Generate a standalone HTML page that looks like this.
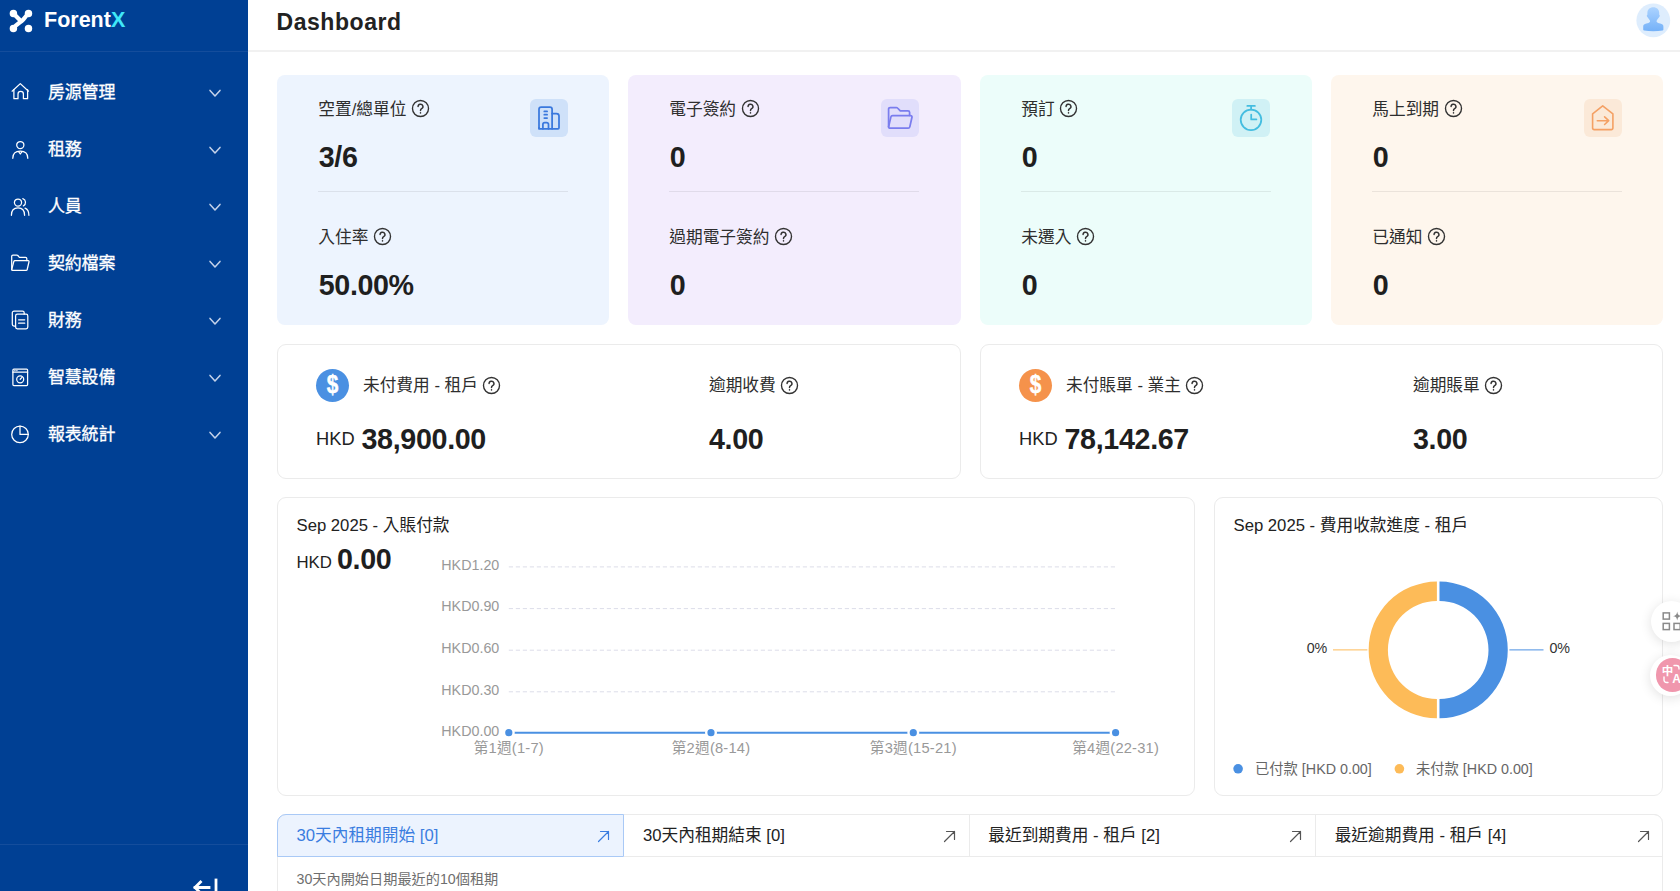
<!DOCTYPE html>
<html lang="zh-Hant">
<head>
<meta charset="utf-8">
<title>Dashboard</title>
<style>
*{box-sizing:border-box;margin:0;padding:0}
html,body{width:1680px;height:891px;overflow:hidden;background:#fff}
body{font-family:"Liberation Sans","Noto Sans CJK TC",sans-serif;color:#1f1f1f;position:relative;-webkit-font-smoothing:antialiased}
.abs{position:absolute}
/* sidebar */
#side{position:absolute;left:0;top:0;width:248px;height:891px;background:#004094;color:#fff}
#logo{position:absolute;left:0;top:0;width:248px;height:52px;border-bottom:1px solid #144d9c}
#logo .name{position:absolute;left:44px;top:6.800px;font-size:21.5px;font-weight:700;line-height:26px;letter-spacing:0px}
#logo .name b{color:#3fe7f8}
.mi{position:absolute;left:0;width:248px;height:40px}
.mi svg.ic{position:absolute;left:10px;top:10px;width:20px;height:20px;fill:none;stroke:#fff;stroke-width:1.25;stroke-linecap:round;stroke-linejoin:round}
.mi .t{position:absolute;left:48px;top:9px;font-size:17px;line-height:24px;font-weight:400;letter-spacing:-0.2px;-webkit-text-stroke:.3px #fff}
.mi svg.ch{position:absolute;left:208px;top:16px;width:14px;height:10px;fill:none;stroke:#c4d2ea;stroke-width:1.5;stroke-linecap:round;stroke-linejoin:round}
#sfoot{position:absolute;left:0;top:844px;width:248px;height:47px;border-top:1px solid #144d9c}
/* header */
#hdr{position:absolute;left:248px;top:0;width:1432px;height:52px;border-bottom:2px solid #f1f1f1;background:#fff}
#hdr h1{position:absolute;left:28.500px;top:8px;font-size:23px;line-height:28px;font-weight:700;color:#222;letter-spacing:.55px}
/* stat cards */
.sc{position:absolute;top:75px;width:332px;height:250px;border-radius:8px}
.sc .l{position:absolute;left:41.300px;font-size:16.7px;line-height:22px;color:#2e2e2e;white-space:nowrap}
.sc .v{position:absolute;left:41.800px;font-size:28.7px;line-height:32px;font-weight:700;color:#1f1f1f;letter-spacing:-.4px}
.sc .hr{position:absolute;left:41px;top:116px;width:250px;height:1px;background:rgba(0,0,0,.075)}
.sc .ib{position:absolute;left:253px;top:24px;width:38px;height:38px;border-radius:6px}
.q{display:inline-block;vertical-align:-3.500px;margin-left:4.500px;width:19px;height:19px}
.q circle{fill:none;stroke:#333;stroke-width:1.3}
.q path{fill:none;stroke:#333;stroke-width:1.4;stroke-linecap:round}

/* row 2 */
.fc{position:absolute;top:344px;height:135px;border:1px solid #ebebeb;border-radius:9px;background:#fff}
.fc .dc{position:absolute;left:38px;top:23.5px;width:33px;height:33px;border-radius:50%;color:#fff;font-size:26px;font-weight:700;line-height:33px;text-align:center}
.fc .dc span{display:block;transform:translateY(-.4px) scale(.8,.97);-webkit-text-stroke:.5px #fff}
.fc .l{position:absolute;font-size:16.7px;line-height:22px;color:#2e2e2e;white-space:nowrap;top:30px}
.fc .cur{position:absolute;left:38px;top:81.5px;font-size:18.3px;line-height:24px;color:#222}
.fc .v{position:absolute;top:77.5px;font-size:28.7px;line-height:32px;font-weight:700;color:#1f1f1f;white-space:nowrap;letter-spacing:-.35px}
/* row 3 */
.cc{position:absolute;top:497px;height:299px;border:1px solid #ebebeb;border-radius:9px;background:#fff}
.cc .tt{position:absolute;left:18.5px;top:17px;font-size:16.7px;line-height:22px;color:#222;white-space:nowrap}
.cc svg text{font-family:"Liberation Sans","Noto Sans CJK TC",sans-serif}
/* row 4 */
#tabs{position:absolute;left:277px;top:814px;width:1386px;height:90px;border:1px solid #ebebeb;border-radius:9px 9px 0 0;background:#fff}
.tab{position:absolute;top:-1px;height:43px;border:1px solid #ebebeb;border-left:none;font-size:16.7px;line-height:22px;color:#222;white-space:nowrap}
.tab span{position:absolute;left:18.5px;top:10px}
.tab:nth-child(2) span{left:19.500px}
.tab svg{position:absolute;right:13px;top:15px;width:13px;height:13px;fill:none;stroke:#555;stroke-width:1.2;stroke-linecap:round;stroke-linejoin:round}
.tab.on{background:#ecf3fe;border:1px solid #a9c9f6;color:#3a7de0;border-radius:9px 0 0 0}
.tab.on svg{stroke:#3a7de0}
</style>
</head>
<body>
<div id="side">
  <div id="logo">
    <svg class="abs" style="left:8.500px;top:8.500px" width="24" height="24" viewBox="0 0 24.500 24.500">
      <g stroke="#fff" stroke-width="4.3" stroke-linecap="round" stroke-linejoin="round" fill="none"><path d="M4.6 4.6 L11.6 11.8"/><path d="M19.9 4.6 C16.5 7.5 15.5 10.5 13 12.300 C10.500 14.200 7.500 15.500 4.600 19.900"/></g>
      <g fill="#fff"><circle cx="4.500" cy="4.500" r="3.800"/><circle cx="19.900" cy="4.500" r="3.800"/><circle cx="4.500" cy="19.900" r="3.800"/><circle cx="19.900" cy="19.900" r="3.800"/></g>
    </svg>
    <div class="name">Forent<b>X</b></div>
  </div>
  <div id="menu">
  <div class="mi" style="top:72px"><svg class="ic" viewBox="0 0 20 20"><path d="M2.100 9.200 L10.3 1.6 L18.500 9.200"/><path d="M3.9 7.6 V16.7 H8 V12 a2.7 2.7 0 0 1 5.4 0 V16.7 H17.600 V7.6"/></svg><span class="t">房源管理</span><svg class="ch" viewBox="0 0 14 10"><path d="M2 2.400 L7 8 L12 2.400"/></svg></div>
  <div class="mi" style="top:129px"><svg class="ic" viewBox="0 0 20 20"><circle cx="10.3" cy="6.1" r="3.6"/><path d="M2.800 19.300 c0-4.800 3-7.100 7.500-7.100 s7.500 2.300 7.500 7.100"/><path d="M8.600 12.700 L10.3 15 L12 12.700"/></svg><span class="t">租務</span><svg class="ch" viewBox="0 0 14 10"><path d="M2 2.400 L7 8 L12 2.400"/></svg></div>
  <div class="mi" style="top:186px"><svg class="ic" viewBox="0 0 20 20"><circle cx="8" cy="6.600" r="3.600"/><path d="M1.400 19.300 c0-4.900 2.700-7.400 6.600-7.400 s6.600 2.500 6.600 7.400"/><path d="M12.800 2.600 a4 4 0 0 1 .6 7.300"/><path d="M15 12.200 c2.700 1 3.900 3.400 3.900 7.100"/></svg><span class="t">人員</span><svg class="ch" viewBox="0 0 14 10"><path d="M2 2.400 L7 8 L12 2.400"/></svg></div>
  <div class="mi" style="top:243px"><svg class="ic" viewBox="0 0 20 20"><path d="M1.700 16.600 V3.300 a1.200 1.200 0 0 1 1.200-1.200 H6.900 a1.200 1.200 0 0 1 .9 .400 L9.400 4.400 H15.600 a1.200 1.200 0 0 1 1.200 1.200 V7.600"/><path d="M1.700 16.600 L3.800 8.500 a1.200 1.200 0 0 1 1.150-.9 H18.100 a.9 .9 0 0 1 .9 1.150 L17.200 16.500 a1.200 1.200 0 0 1-1.150 .9 H2.600 a.9 .9 0 0 1-.9-.8z"/></svg><span class="t">契約檔案</span><svg class="ch" viewBox="0 0 14 10"><path d="M2 2.400 L7 8 L12 2.400"/></svg></div>
  <div class="mi" style="top:300px"><svg class="ic" viewBox="0 0 20 20"><path d="M5.600 16 H4 a1.700 1.700 0 0 1-1.700-1.700 V2.800 a1.700 1.700 0 0 1 1.700-1.700 H12.500 a1.700 1.700 0 0 1 1.700 1.700 V4.200"/><rect x="5.600" y="4.200" width="12.200" height="14.600" rx="1.700"/><path d="M8.600 9.800 H14.700 M8.600 13.200 H14.700"/></svg><span class="t">財務</span><svg class="ch" viewBox="0 0 14 10"><path d="M2 2.400 L7 8 L12 2.400"/></svg></div>
  <div class="mi" style="top:357px"><svg class="ic" viewBox="0 0 20 20"><rect x="2.900" y="2" width="14.700" height="16.600" rx="1"/><path d="M2.900 5.200 H17.600"/><circle cx="10.2" cy="12.300" r="3.500"/><path d="M10.2 12.300 L12 10.400"/><path d="M4.800 3.600 h.2 M6.800 3.600 h.2"/></svg><span class="t">智慧設備</span><svg class="ch" viewBox="0 0 14 10"><path d="M2 2.400 L7 8 L12 2.400"/></svg></div>
  <div class="mi" style="top:414px"><svg class="ic" viewBox="0 0 20 20"><circle cx="10" cy="10.400" r="8.300"/><path d="M10 2.100 V10.400 H18.300"/></svg><span class="t">報表統計</span><svg class="ch" viewBox="0 0 14 10"><path d="M2 2.400 L7 8 L12 2.400"/></svg></div>
  </div>
  <div id="sfoot"><svg class="abs" style="left:191.800px;top:33.200px" width="28" height="16" viewBox="0 0 28 16" fill="none" stroke="#fff" stroke-width="2.8" stroke-linecap="square" stroke-linejoin="miter"><path d="M3 9.5 H17 M8.5 4 L3 9.5 L8.5 15"/><path d="M24 2 V16"/></svg></div>
</div>

<div id="hdr"><h1>Dashboard</h1></div>

<div id="cards">
<div class="sc" style="left:277px;background:#edf4fe">
  <div class="l" style="top:23.5px">空置/總單位<svg class="q" viewBox="-0.5 -0.5 18 18"><circle cx="8.5" cy="8.5" r="7.6"/><path d="M6.2 6.7 a2.3 2.3 0 1 1 3.4 2 c-.8 .5-1.1 .9-1.1 1.7"/><path d="M8.5 12.6 v.2"/></svg></div><div class="v" style="top:66px">3/6</div>
  <div class="ib" style="background:#cfe1f9"><svg width="38" height="38" viewBox="0 0 38 38"><g fill="none" stroke="#3a78dd" stroke-width="1.75" stroke-linejoin="round" stroke-linecap="round"><path d="M9 29.800 V10.200 a2.200 2.200 0 0 1 2.200-2.200 H19.900 a2.200 2.200 0 0 1 2.200 2.200 V29.800"/><path d="M22.100 14.600 H26.500 a2.500 2.500 0 0 1 2.500 2.500 V28.800 a1 1 0 0 1-1 1 H10 a1 1 0 0 1-1-1"/><path d="M12.900 29.800 V25.400 a1.800 1.800 0 0 1 1.800-1.800 H16.700 a1.800 1.800 0 0 1 1.800 1.800 V29.800"/><path d="M14.300 12.400 h2.800 M14.300 15.700 h2.800 M14.300 19 h2.800"/></g></svg></div>
  <div class="hr"></div>
  <div class="l" style="top:151.5px">入住率<svg class="q" viewBox="-0.5 -0.5 18 18"><circle cx="8.5" cy="8.5" r="7.6"/><path d="M6.2 6.7 a2.3 2.3 0 1 1 3.4 2 c-.8 .5-1.1 .9-1.1 1.7"/><path d="M8.5 12.6 v.2"/></svg></div><div class="v" style="top:194px">50.00%</div>
</div>
<div class="sc" style="left:628px;width:333px;background:#f3edfd">
  <div class="l" style="top:23.5px">電子簽約<svg class="q" viewBox="-0.5 -0.5 18 18"><circle cx="8.5" cy="8.5" r="7.6"/><path d="M6.2 6.7 a2.3 2.3 0 1 1 3.4 2 c-.8 .5-1.1 .9-1.1 1.7"/><path d="M8.5 12.6 v.2"/></svg></div><div class="v" style="top:66px">0</div>
  <div class="ib" style="background:#e1defb"><svg width="38" height="38" viewBox="0 0 38 38"><g fill="none" stroke="#7a7dee" stroke-width="1.75" stroke-linejoin="round" stroke-linecap="round"><path d="M7.600 27.800 V10 a1.500 1.500 0 0 1 1.500-1.500 H15.400 a1.500 1.500 0 0 1 1.100 .500 L19.300 11.900 H27 a1.600 1.600 0 0 1 1.600 1.600 V16.300"/><path d="M7.600 27.800 L9.900 17.900 a1.700 1.700 0 0 1 1.650-1.300 H29.600 a1.400 1.400 0 0 1 1.370 1.700 L28.800 27.900 a1.700 1.700 0 0 1-1.650 1.300 H9 a1.400 1.400 0 0 1-1.400-1.400z"/></g></svg></div>
  <div class="hr"></div>
  <div class="l" style="top:151.5px">過期電子簽約<svg class="q" viewBox="-0.5 -0.5 18 18"><circle cx="8.5" cy="8.5" r="7.6"/><path d="M6.2 6.7 a2.3 2.3 0 1 1 3.4 2 c-.8 .5-1.1 .9-1.1 1.7"/><path d="M8.5 12.6 v.2"/></svg></div><div class="v" style="top:194px">0</div>
</div>
<div class="sc" style="left:980px;background:#ecfdfa">
  <div class="l" style="top:23.5px">預訂<svg class="q" viewBox="-0.5 -0.5 18 18"><circle cx="8.5" cy="8.5" r="7.6"/><path d="M6.2 6.7 a2.3 2.3 0 1 1 3.4 2 c-.8 .5-1.1 .9-1.1 1.7"/><path d="M8.5 12.6 v.2"/></svg></div><div class="v" style="top:66px">0</div>
  <div class="ib" style="background:#d0f1f5;left:252px"><svg width="38" height="38" viewBox="0 0 38 38"><g fill="none" stroke="#44bde0" stroke-width="1.75" stroke-linejoin="round" stroke-linecap="round"><circle cx="19" cy="20.800" r="10.300"/><path d="M19.100 10.500 V6.900 M15.300 6.900 H22.900"/><path d="M19.200 15.600 V20.400 H24.400"/></g></svg></div>
  <div class="hr"></div>
  <div class="l" style="top:151.5px">未遷入<svg class="q" viewBox="-0.5 -0.5 18 18"><circle cx="8.5" cy="8.5" r="7.6"/><path d="M6.2 6.7 a2.3 2.3 0 1 1 3.4 2 c-.8 .5-1.1 .9-1.1 1.7"/><path d="M8.5 12.6 v.2"/></svg></div><div class="v" style="top:194px">0</div>
</div>
<div class="sc" style="left:1331px;background:#fef6ed">
  <div class="l" style="top:23.5px">馬上到期<svg class="q" viewBox="-0.5 -0.5 18 18"><circle cx="8.5" cy="8.5" r="7.6"/><path d="M6.2 6.7 a2.3 2.3 0 1 1 3.4 2 c-.8 .5-1.1 .9-1.1 1.7"/><path d="M8.5 12.6 v.2"/></svg></div><div class="v" style="top:66px">0</div>
  <div class="ib" style="background:#fbe9d8"><svg width="38" height="38" viewBox="0 0 38 38"><g fill="none" stroke="#f4a064" stroke-width="1.600" stroke-linejoin="round" stroke-linecap="round"><path d="M8.600 14.800 L18.700 6.900 L28.900 14.800 V29.100 a1.500 1.500 0 0 1-1.500 1.500 H10.100 a1.500 1.500 0 0 1-1.500-1.500z"/><path d="M13.300 21.700 H24.600 M20.600 17.900 L24.700 21.700 L20.600 25.500"/></g></svg></div>
  <div class="hr"></div>
  <div class="l" style="top:151.5px">已通知<svg class="q" viewBox="-0.5 -0.5 18 18"><circle cx="8.5" cy="8.5" r="7.6"/><path d="M6.2 6.7 a2.3 2.3 0 1 1 3.4 2 c-.8 .5-1.1 .9-1.1 1.7"/><path d="M8.5 12.6 v.2"/></svg></div><div class="v" style="top:194px">0</div>
</div>
</div>
<div id="row2">
<div class="fc" style="left:277px;width:684px">
  <div class="dc" style="background:#4a90e2"><span>$</span></div>
  <div class="l" style="left:85px">未付費用 - 租戶<svg class="q" viewBox="-0.5 -0.5 18 18"><circle cx="8.5" cy="8.5" r="7.6"/><path d="M6.2 6.7 a2.3 2.3 0 1 1 3.4 2 c-.8 .5-1.1 .9-1.1 1.7"/><path d="M8.5 12.6 v.2"/></svg></div>
  <div class="cur">HKD</div><div class="v" style="left:83.5px">38,900.00</div>
  <div class="l" style="left:431px">逾期收費<svg class="q" viewBox="-0.5 -0.5 18 18"><circle cx="8.5" cy="8.5" r="7.6"/><path d="M6.2 6.7 a2.3 2.3 0 1 1 3.4 2 c-.8 .5-1.1 .9-1.1 1.7"/><path d="M8.5 12.6 v.2"/></svg></div>
  <div class="v" style="left:431px">4.00</div>
</div>
<div class="fc" style="left:980px;width:683px">
  <div class="dc" style="background:#f5924b"><span>$</span></div>
  <div class="l" style="left:85px">未付賬單 - 業主<svg class="q" viewBox="-0.5 -0.5 18 18"><circle cx="8.5" cy="8.5" r="7.6"/><path d="M6.2 6.7 a2.3 2.3 0 1 1 3.4 2 c-.8 .5-1.1 .9-1.1 1.7"/><path d="M8.5 12.6 v.2"/></svg></div>
  <div class="cur">HKD</div><div class="v" style="left:83.5px">78,142.67</div>
  <div class="l" style="left:432px">逾期賬單<svg class="q" viewBox="-0.5 -0.5 18 18"><circle cx="8.5" cy="8.5" r="7.6"/><path d="M6.2 6.7 a2.3 2.3 0 1 1 3.4 2 c-.8 .5-1.1 .9-1.1 1.7"/><path d="M8.5 12.6 v.2"/></svg></div>
  <div class="v" style="left:432px">3.00</div>
</div>
</div>
<div id="row3">
<div class="cc" style="left:277px;width:918px">
  <div class="tt">Sep 2025 - 入賬付款</div>
  <div class="abs" style="left:18.5px;top:53px;font-size:16.8px;line-height:24px;color:#222">HKD</div>
  <div class="abs" style="left:59px;top:44.5px;font-size:28.7px;line-height:32px;font-weight:700;color:#1f1f1f;letter-spacing:-.35px">0.00</div>
  <svg class="abs" style="left:0;top:0" width="915" height="296" viewBox="0 0 915 296"><path d="M230.8 68.9 H838.2" stroke="#dcdde9" stroke-width="1" stroke-dasharray="4.2 2.8" fill="none"/><text x="221.3" y="71.7" text-anchor="end" font-size="14.3" fill="#999">HKD1.20</text><path d="M230.8 110.6 H838.2" stroke="#dcdde9" stroke-width="1" stroke-dasharray="4.2 2.8" fill="none"/><text x="221.3" y="113.4" text-anchor="end" font-size="14.3" fill="#999">HKD0.90</text><path d="M230.8 152.2 H838.2" stroke="#dcdde9" stroke-width="1" stroke-dasharray="4.2 2.8" fill="none"/><text x="221.3" y="155.0" text-anchor="end" font-size="14.3" fill="#999">HKD0.60</text><path d="M230.8 193.8 H838.2" stroke="#dcdde9" stroke-width="1" stroke-dasharray="4.2 2.8" fill="none"/><text x="221.3" y="196.6" text-anchor="end" font-size="14.3" fill="#999">HKD0.30</text><text x="221.3" y="237.8" text-anchor="end" font-size="14.3" fill="#999">HKD0.00</text><path d="M230.8 234.7 H837.6" stroke="#4a90e2" stroke-width="2" fill="none"/><circle cx="230.8" cy="234.7" r="4.8" fill="#4a90e2" stroke="#fff" stroke-width="2.4"/><text x="230.8" y="255.3" text-anchor="middle" font-size="14.7" letter-spacing=".2" fill="#999">第1週(1-7)</text><circle cx="433" cy="234.7" r="4.8" fill="#4a90e2" stroke="#fff" stroke-width="2.4"/><text x="433" y="255.3" text-anchor="middle" font-size="14.7" letter-spacing=".2" fill="#999">第2週(8-14)</text><circle cx="635.3" cy="234.7" r="4.8" fill="#4a90e2" stroke="#fff" stroke-width="2.4"/><text x="635.3" y="255.3" text-anchor="middle" font-size="14.7" letter-spacing=".2" fill="#999">第3週(15-21)</text><circle cx="837.6" cy="234.7" r="4.8" fill="#4a90e2" stroke="#fff" stroke-width="2.4"/><text x="837.6" y="255.3" text-anchor="middle" font-size="14.7" letter-spacing=".2" fill="#999">第4週(22-31)</text></svg>
</div>
<div class="cc" style="left:1214px;width:449px">
  <div class="tt">Sep 2025 - 費用收款進度 - 租戶</div>
  <svg class="abs" style="left:0;top:0" width="447" height="296" viewBox="0 0 447 296"><path d="M224.5 83.6 A68.3 68.3 0 0 1 224.5 220.2 L224.5 200.9 A49 49 0 0 0 224.5 102.9Z" fill="#4a90e2"/><path d="M221.9 83.6 A68.3 68.3 0 0 0 221.9 220.2 L221.9 200.9 A49 49 0 0 1 221.9 102.9Z" fill="#fdbb58"/><path d="M118 151.9 H152.4" stroke="#fdbb58" stroke-width="1"/><path d="M294.4 151.9 H328.5" stroke="#4a90e2" stroke-width="1"/><text x="112.3" y="155.4" text-anchor="end" font-size="14.3" fill="#333">0%</text><text x="334.4" y="155.4" font-size="14.3" fill="#333">0%</text><circle cx="23.1" cy="270.8" r="4.8" fill="#4a90e2"/><text x="40" y="275.8" font-size="14.3" fill="#666">已付款 [HKD 0.00]</text><circle cx="184.4" cy="270.8" r="4.8" fill="#fdbb58"/><text x="201" y="275.8" font-size="14.3" fill="#666">未付款 [HKD 0.00]</text></svg>
</div>
</div>
<div id="row4"><div id="tabs"><div class="tab on" style="left:-1px;width:346.5px"><span>30天內租期開始 [0]</span><svg viewBox="0 0 13 13"><path d="M1.5 11.5 L11.5 1.5 M3.5 1.5 H11.5 V9.5"/></svg></div><div class="tab" style="left:345.5px;width:346.3px;padding-left:1px"><span>30天內租期結束 [0]</span><svg viewBox="0 0 13 13"><path d="M1.5 11.5 L11.5 1.5 M3.5 1.5 H11.5 V9.5"/></svg></div><div class="tab" style="left:691.8px;width:346.4px"><span>最近到期費用 - 租戶 [2]</span><svg viewBox="0 0 13 13"><path d="M1.5 11.5 L11.5 1.5 M3.5 1.5 H11.5 V9.5"/></svg></div><div class="tab" style="left:1038.2px;width:346.8px;border-right:none;border-radius:0 9px 0 0"><span>最近逾期費用 - 租戶 [4]</span><svg viewBox="0 0 13 13"><path d="M1.5 11.5 L11.5 1.5 M3.5 1.5 H11.5 V9.5"/></svg></div><div class="abs" style="left:18.5px;top:54px;font-size:14.2px;line-height:20px;color:#6e6e6e;white-space:nowrap">30天內開始日期最近的10個租期</div></div></div>

<svg class="abs" style="left:1636px;top:3px" width="35" height="35" viewBox="0 0 35 35">
  <defs><linearGradient id="ag" x1="0" y1="0" x2="0" y2="1"><stop offset="0" stop-color="#acd3ff"/><stop offset="1" stop-color="#74b1f8"/></linearGradient></defs>
  <circle cx="17.3" cy="17.4" r="16.9" fill="#deedfd"/>
  <path fill="url(#ag)" d="M17.3 4.2 c3.6 0 5.9 2.3 5.9 5.6 c0 .9 0 1.600 .1 2.100 c.5 .3 .7 .8 .3 1.500 l-2.600 3.600 c-.7 1 -.6 2 .4 2.600 c.9 .6 2.300 .900 4.200 1.500 c1.400 .5 1.800 1.400 1.800 2.700 v2.600 c0 .6 -.4 1 -1 1.100 c-2.700 .5 -5.700 .700 -9.100 .700 s-6.400 -.200 -9.100 -.700 c-.6 -.1 -1 -.5 -1 -1.100 v-2.600 c0 -1.300 .4 -2.200 1.800 -2.700 c1.900 -.6 3.300 -.900 4.200 -1.500 c1 -.6 1.100 -1.600 .4 -2.600 l-2.600 -3.600 c-.4 -.7 -.2 -1.200 .3 -1.500 c.1 -.5 .1 -1.200 .1 -2.100 c0 -3.300 2.300 -5.600 5.900 -5.600z"/>
</svg>
<div class="abs" style="left:1651px;top:600.5px;width:41px;height:41px;border-radius:50%;background:#fff;box-shadow:0 2px 12px rgba(0,0,0,.12)">
  <svg class="abs" style="left:10px;top:9px" width="22" height="22" viewBox="0 0 22 22" fill="none" stroke="#8a8a8a" stroke-width="1.5"><rect x="2.2" y="2.900" width="6.200" height="6.200"/><rect x="2.2" y="13.400" width="6.200" height="6.200"/><rect x="13" y="13.400" width="6.200" height="6.200"/><path d="M16.200 1.400 C16.700 4.700 17.500 5.500 20.800 6 C17.500 6.500 16.700 7.300 16.200 10.600 C15.700 7.300 14.900 6.500 11.600 6 C14.900 5.500 15.700 4.700 16.200 1.400z" fill="#8a8a8a" stroke="none"/></svg>
</div>
<div class="abs" style="left:1650px;top:655px;width:41px;height:41px;border-radius:50%;background:#fff;box-shadow:0 2px 12px rgba(0,0,0,.12)">
  <div class="abs" style="left:5.800px;top:3px;width:33.600px;height:33.600px;border-radius:50%;background:#f097ad;color:#fff;font-weight:700">
    <span class="abs" style="left:6px;top:6.500px;font-size:11.500px;line-height:12px">中</span>
    <span class="abs" style="left:16.500px;top:15px;font-size:12px;line-height:12px">A</span>
    <svg class="abs" style="left:7px;top:18px" width="8" height="8" viewBox="0 0 8 8" fill="none" stroke="#fff" stroke-width="1.4" stroke-linecap="round"><path d="M1 1 V4 a2.500 2.500 0 0 0 2.500 2.500 H5"/></svg>
    <svg class="abs" style="left:17px;top:6px" width="8" height="8" viewBox="0 0 8 8" fill="none" stroke="#fff" stroke-width="1.400" stroke-linecap="round"><path d="M1 1.500 H3.500 a2.500 2.500 0 0 1 2.500 2.500 V5"/></svg>
  </div>
</div>
</body>
</html>
